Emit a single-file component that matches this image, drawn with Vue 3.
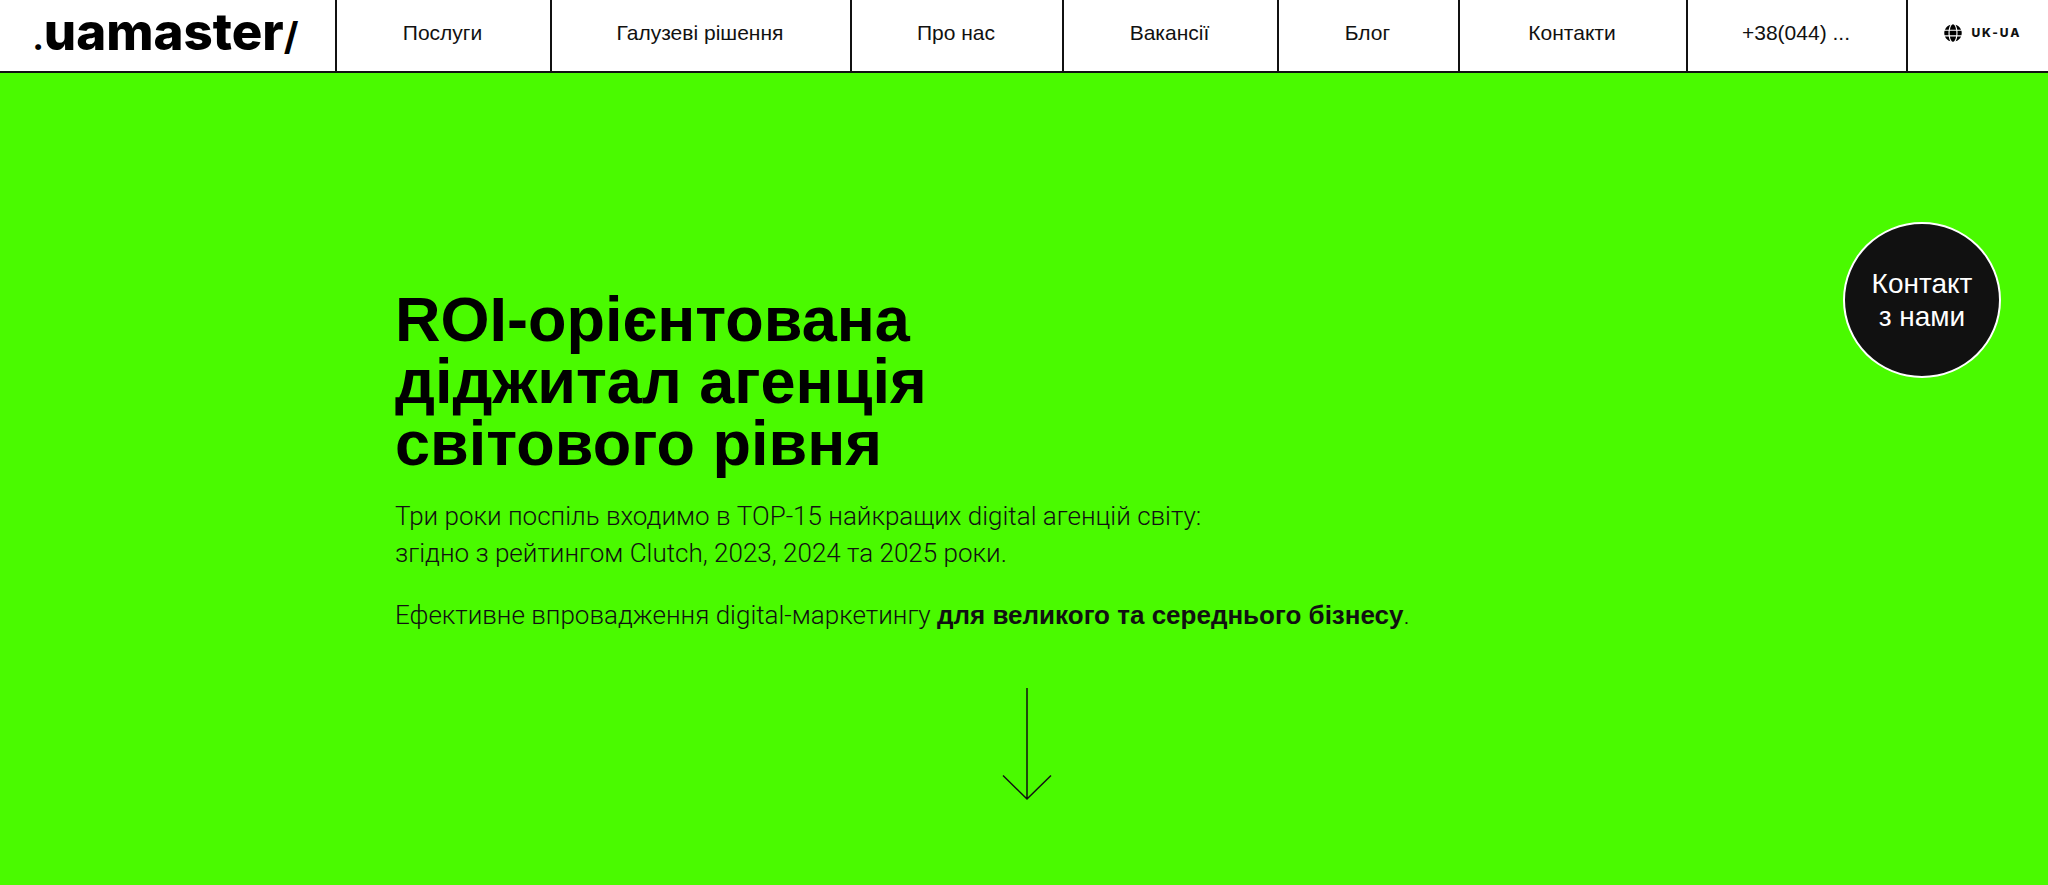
<script setup>
const links = [
  { label: 'Послуги', href: '#services' },
  { label: 'Галузеві рішення', href: '#industries' },
  { label: 'Про нас', href: '#about' },
  { label: 'Вакансії', href: '#jobs' },
  { label: 'Блог', href: '#blog' },
  { label: 'Контакти', href: '#contacts' },
  { label: '+38(044) ...', href: 'tel:+38044' },
]
</script>

<template>
  <div class="page">
    <header class="header">
      <a class="logo" href="#home"><span class="dot">.</span>uamaster<span class="slash">/</span></a>
      <nav class="nav">
        <a v-for="link in links" :key="link.label" class="cell" :href="link.href">{{ link.label }}</a>
      </nav>
      <button class="cell lang" type="button">
        <svg class="globe" viewBox="0 0 496 512" aria-hidden="true">
          <path d="M336.500 160C322 70.700 287.800 8 248 8s-74 62.700-88.500 152h177zM152 256c0 22.200 1.200 43.500 3.300 64h185.300c2.100-20.500 3.300-41.800 3.300-64s-1.200-43.500-3.300-64H155.300c-2.100 20.500-3.300 41.800-3.300 64zm324.700-96c-28.600-67.900-86.500-120.400-158-141.600 24.400 33.800 41.200 84.700 50 141.600h108zM177.200 18.400C105.800 39.600 47.800 92.100 19.300 160h108c8.700-56.900 25.500-107.800 49.900-141.600zM487.400 192H372.700c2.100 21 3.300 42.500 3.300 64s-1.200 43-3.300 64h114.600c5.500-20.500 8.600-41.800 8.600-64s-3.100-43.500-8.500-64zM120 256c0-21.500 1.200-43 3.300-64H8.600C3.200 212.500 0 233.800 0 256s3.200 43.500 8.600 64h114.600c-2-21-3.200-42.500-3.200-64zm39.500 96c14.500 89.300 48.700 152 88.500 152s74-62.700 88.500-152h-177zm159.300 141.600c71.400-21.200 129.400-73.700 158-141.600h-108c-8.800 56.900-25.600 107.800-50 141.600zM19.300 352c28.600 67.900 86.500 120.400 158 141.600-24.400-33.800-41.200-84.700-50-141.600h-108z" />
        </svg>
        UK-UA
      </button>
    </header>

    <main class="hero">
      <div class="content">
        <h1>ROI-орієнтована<br />діджитал агенція<br />світового рівня</h1>
        <p>Три роки поспіль входимо в TOP-15 найкращих digital агенцій світу:<br />згідно з рейтингом Clutch, 2023, 2024 та 2025 роки.</p>
        <p>Ефективне впровадження digital-маркетингу <strong>для великого та середнього бізнесу</strong>.</p>
        <a class="down" href="#next" aria-label="Далі">
          <svg viewBox="0 0 50 113" aria-hidden="true">
            <path d="M25 0V111M1 87.500L25 111L49 87.500" />
          </svg>
        </a>
      </div>
    </main>

    <button class="contact" type="button">Контакт<br />з нами</button>
  </div>
</template>

<style>
body {
  margin: 0;
}
</style>

<style scoped>
.page {
  position: relative;
  display: flex;
  flex-direction: column;
  min-height: 100vh;
  background: #4afa00;
  color: #111;
  font-family: "Liberation Sans", Arial, sans-serif;
}

.header {
  display: grid;
  grid-template-columns: 335fr 1571fr 142fr;
  height: 71px;
  border-bottom: 2px solid #111;
  background: #fff;
}

.logo {
  display: flex;
  align-items: baseline;
  justify-content: center;
  padding-right: 4px;
  color: #000;
  font: 800 51px/64px Inter, sans-serif;
  text-decoration: none;
}

.dot {
  font-size: 32px;
}

.slash {
  font-size: 38px;
  font-weight: 700;
}

.nav {
  display: grid;
  grid-template-columns: 215fr 300fr 212fr 215fr 181fr 228fr 220fr;
}

.cell {
  display: flex;
  align-items: center;
  justify-content: center;
  box-sizing: border-box;
  padding: 0 2px 6px 0;
  border: 0;
  border-left: 2px solid #111;
  background: none;
  color: #111;
  font-size: 21px;
  text-decoration: none;
  white-space: nowrap;
}

.lang {
  gap: 9px;
  padding-left: 12px;
  font: 800 12px/16px Inter, sans-serif;
  letter-spacing: 2px;
}

.globe {
  width: 18px;
  height: 18px;
  fill: #000;
}

.hero {
  flex: 1;
  padding: 215px 0 40px 6px;
}

.content {
  max-width: 1264px;
  margin: 0 auto;
}

h1 {
  margin: 0 0 24px;
  color: #000;
  font-size: 63px;
  line-height: 62px;
}

p {
  margin: 0 0 25px;
  font: 300 26px/37px Roboto, sans-serif;
}

strong {
  font-family: "Liberation Sans", Arial, sans-serif;
  font-weight: 700;
}

.down {
  display: block;
  width: 50px;
  margin: 54px auto 0;
}

.down svg {
  display: block;
  width: 50px;
  height: 113px;
  fill: none;
  stroke: #111;
  stroke-width: 1.5;
}

.contact {
  position: absolute;
  top: 222px;
  right: 47px;
  width: 158px;
  height: 156px;
  padding: 0;
  border: 2px solid #fff;
  border-radius: 50%;
  background: #111;
  color: #fff;
  font: 28px/33px "Liberation Sans", Arial, sans-serif;
}
</style>
